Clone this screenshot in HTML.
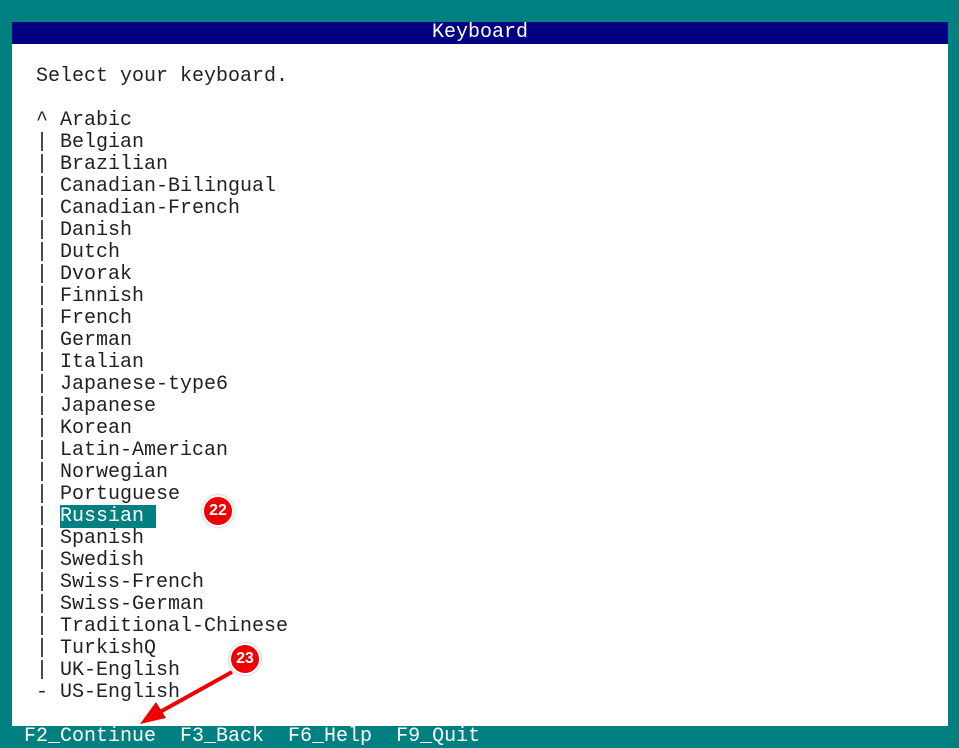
<!DOCTYPE html>
<html><head><style>
body{margin:0;width:959px;height:748px;background:#008080;position:relative;overflow:hidden;font-family:"Liberation Mono",monospace;font-size:20px;}
.panel{position:absolute;left:12px;top:22px;width:936px;height:704px;background:#fff;}
.title{position:absolute;left:12px;top:22px;width:936px;height:22px;background:#000080;color:#fff;text-align:center;line-height:22px;}
.t{position:absolute;left:36px;white-space:pre;line-height:22px;color:#222;}
.hl{background:#008080;color:#fff;}
.foot{position:absolute;left:0;top:726px;width:959px;height:22px;background:#008080;color:#fff;line-height:22px;padding-top:0;white-space:pre;}
.badge{position:absolute;width:28px;height:28px;border-radius:50%;background:#e00;border:2px solid #fff;box-shadow:0 0 2px #999;color:#fff;font:bold 16px "Liberation Sans",sans-serif;text-align:center;line-height:28px;}
</style></head><body>
<div class="panel"></div>
<div class="title">Keyboard</div>
<div class="t" style="top:66px">Select your keyboard.</div>
<div class="t" style="top:110px">^ Arabic
| Belgian
| Brazilian
| Canadian-Bilingual
| Canadian-French
| Danish
| Dutch
| Dvorak
| Finnish
| French
| German
| Italian
| Japanese-type6
| Japanese
| Korean
| Latin-American
| Norwegian
| Portuguese
| <span class="hl">Russian </span>
| Spanish
| Swedish
| Swiss-French
| Swiss-German
| Traditional-Chinese
| TurkishQ
| UK-English
- US-English</div>
<div class="foot">  F2_Continue  F3_Back  F6_Help  F9_Quit</div>
<div class="badge" style="left:202px;top:495px">22</div>
<div class="badge" style="left:229px;top:643px">23</div>
<svg style="position:absolute;left:0;top:0" width="959" height="748">
<path d="M232 672 L160 712" stroke="#e00" stroke-width="4" fill="none"/>
<path d="M140 724 L156 702 L166 718 Z" fill="#e00"/>
</svg>
</body></html>
